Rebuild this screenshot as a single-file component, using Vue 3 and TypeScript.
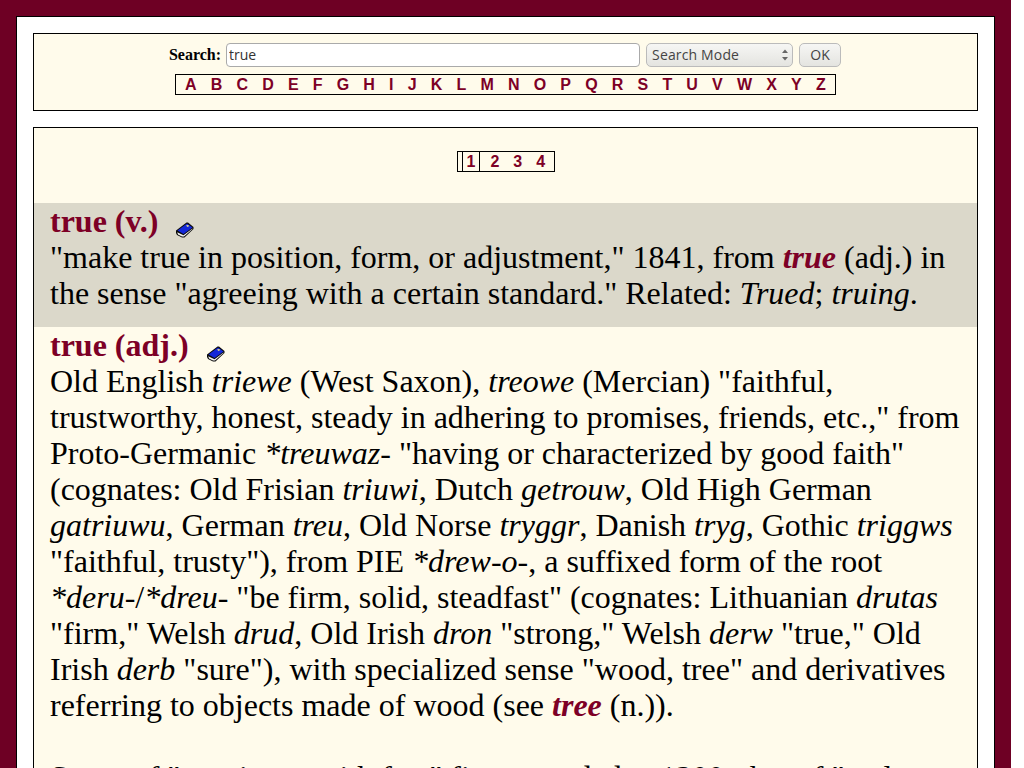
<script setup lang="ts">
const letters: string[] = 'ABCDEFGHIJKLMNOPQRSTUVWXYZ'.split('')
const pages: string[] = ['2', '3', '4']
</script>

<template>
  <div class="page">
    <div class="sheet">
      <section class="box search">
        <form class="search-row" @submit.prevent>
          <label class="search-label" for="q">Search:</label>
          <input id="q" class="search-input" type="text" value="true" />
          <div class="mode">
            <span>Search Mode</span>
            <svg class="updown" width="8" height="14" viewBox="0 0 8 14">
              <path d="M4 1.5 L7 5 L1 5 Z" fill="#666" />
              <path d="M4 12.5 L7 9 L1 9 Z" fill="#666" />
            </svg>
          </div>
          <button class="ok" type="button">OK</button>
        </form>
        <div class="letters">
          <a v-for="l in letters" :key="l" class="letter">{{ l }}</a>
        </div>
      </section>

      <section class="box results">
        <div class="pager-wrap">
          <div class="pager">
            <span class="pager-stub"></span>
            <a class="pg current">1</a>
            <a v-for="p in pages" :key="p" class="pg">{{ p }}</a>
          </div>
        </div>

        <article class="entry shaded">
          <div class="term">
            <a class="term-link">true (v.)</a>
            <svg class="book" width="19" height="16" viewBox="0 0 19 16">
              <path d="M1 8.5 L11.5 0.5 L13 0.5 L18.5 5 L18.5 7 L9.5 15.5 L7 15.5 L2 13 L1 11 Z" fill="#0a0a0a" />
              <path d="M2.5 8.5 L12 1.5 L17.5 5.5 L8.5 12 Z" fill="#1428d8" />
              <path d="M11 3.5 L13 3 L14.3 4 L12.5 5 Z" fill="#e6df8c" />
              <path d="M2.2 10.2 L8.5 13.2 L17.5 6.5 L17.5 7 L9 14.5 L7 14.5 L3 12.5 Z" fill="#f2f2f2" />
            </svg>
          </div>
          <p>"make true in position, form, or adjustment," 1841, from <a class="xref">true</a> (adj.) in the sense "agreeing with a certain standard." Related: <i>Trued</i>; <i>truing</i>.</p>
        </article>

        <article class="entry">
          <div class="term">
            <a class="term-link">true (adj.)</a>
            <svg class="book" width="19" height="16" viewBox="0 0 19 16">
              <path d="M1 8.5 L11.5 0.5 L13 0.5 L18.5 5 L18.5 7 L9.5 15.5 L7 15.5 L2 13 L1 11 Z" fill="#0a0a0a" />
              <path d="M2.5 8.5 L12 1.5 L17.5 5.5 L8.5 12 Z" fill="#1428d8" />
              <path d="M11 3.5 L13 3 L14.3 4 L12.5 5 Z" fill="#e6df8c" />
              <path d="M2.2 10.2 L8.5 13.2 L17.5 6.5 L17.5 7 L9 14.5 L7 14.5 L3 12.5 Z" fill="#f2f2f2" />
            </svg>
          </div>
          <p>Old English <i>triewe</i> (West Saxon), <i>treowe</i> (Mercian) "faithful, trustworthy, honest, steady in adhering to promises, friends, etc.," from Proto-Germanic <i>*treuwaz-</i> "having or characterized by good faith" (cognates: Old Frisian <i>triuwi</i>, Dutch <i>getrouw</i>, Old High German <i>gatriuwu</i>, German <i>treu</i>, Old Norse <i>tryggr</i>, Danish <i>tryg</i>, Gothic <i>triggws</i> "faithful, trusty"), from PIE <i>*drew-o-</i>, a suffixed form of the root <i>*deru-</i>/<i>*dreu-</i> "be firm, solid, steadfast" (cognates: Lithuanian <i>drutas</i> "firm," Welsh <i>drud</i>, Old Irish <i>dron</i> "strong," Welsh <i>derw</i> "true," Old Irish <i>derb</i> "sure"), with specialized sense "wood, tree" and derivatives referring to objects made of wood (see <a class="xref">tree</a> (n.)).</p>
          <p class="next">Sense of "consistent with fact" first recorded c. 1200; that of "real</p>
        </article>
      </section>
    </div>
  </div>
</template>

<style scoped>
.page {
  width: 1011px;
  height: 768px;
  box-sizing: border-box;
  background: #6e0024;
  padding: 16px 16px 0;
  overflow: hidden;
}
.sheet {
  background: #fff;
  border: 1px solid #000;
  border-bottom: 0;
  height: 900px;
  padding: 16px 16px 0;
  box-sizing: border-box;
}
.box {
  background: #fffbeb;
  border: 1px solid #000;
}
.search {
  height: 78px;
  box-sizing: border-box;
  padding-top: 9px;
  display: flex;
  flex-direction: column;
  align-items: center;
}
.search-row {
  display: flex;
  align-items: center;
  height: 24px;
  margin: 0;
  font-family: "Liberation Serif", serif;
}
.search-label {
  font-size: 16px;
  font-weight: bold;
  color: #000;
  margin-right: 5px;
  margin-left: -1px;
}
.search-input {
  width: 414px;
  height: 24px;
  box-sizing: border-box;
  border: 1px solid #aaa;
  border-radius: 4px;
  background: #fff;
  padding: 0 2px 2px;
  margin: 0 6px 0 0;
  font-family: "Open Sans", "DejaVu Sans", sans-serif;
  font-size: 14px;
  color: #333;
  outline: none;
}
.mode {
  width: 147px;
  height: 24px;
  box-sizing: border-box;
  border: 1px solid #bbb;
  border-radius: 5px;
  background: linear-gradient(#f6f6f4, #e4e4e0);
  display: flex;
  align-items: center;
  justify-content: space-between;
  padding: 0 3px 2px 5px;
  margin-right: 6px;
  font-family: "Open Sans", "DejaVu Sans", sans-serif;
  font-size: 14px;
  letter-spacing: 0.15px;
  color: #444;
}
.updown {
  margin-top: 2px;
}
.ok {
  width: 42px;
  height: 24px;
  box-sizing: border-box;
  border: 1px solid #bbb;
  border-radius: 5px;
  background: linear-gradient(#f6f6f4, #e4e4e0);
  padding: 0 0 2px;
  font-family: "Open Sans", "DejaVu Sans", sans-serif;
  font-size: 14px;
  color: #444;
}
.letters {
  margin-top: 7px;
  height: 21px;
  box-sizing: border-box;
  width: 661px;
  border: 1px solid #000;
  display: flex;
  justify-content: space-between;
  align-items: center;
  padding: 0 9px;
  font-family: "Liberation Sans", Arial, sans-serif;
  font-size: 16px;
  font-weight: bold;
}
.letter {
  color: #7d0026;
}
.results {
  margin-top: 16px;
  padding-top: 23px;
}
.pager-wrap {
  display: flex;
  justify-content: center;
  height: 52px;
}
.pager {
  width: 98px;
  height: 21px;
  box-sizing: border-box;
  border: 1px solid #000;
  display: flex;
  align-items: center;
  font-family: "Liberation Sans", Arial, sans-serif;
  font-size: 16px;
  font-weight: bold;
}
.pager-stub {
  width: 4px;
  height: 100%;
  border-right: 1px solid #000;
}
.pg {
  color: #7d0026;
  margin-left: 14px;
  line-height: 19px;
}
.pg.current {
  margin-left: 0;
  padding: 0 4px;
  border-right: 1px solid #000;
}
.pg.current + .pg {
  margin-left: 10px;
}
.entry {
  padding: 0 16px;
  font-family: "Liberation Serif", serif;
  font-size: 32px;
  line-height: 36px;
  color: #000;
}
.entry.shaded {
  background: #dbd8ca;
  padding-bottom: 16px;
}
.term {
  font-size: 32px;
  line-height: 36px;
  font-weight: bold;
  white-space: nowrap;
}
.term-link {
  color: #7d0026;
}
.book {
  margin-left: 17px;
  vertical-align: -6px;
}
p {
  margin: 0;
}
.next {
  margin-top: 36px;
}
.xref {
  color: #7d0026;
  font-weight: bold;
  font-style: italic;
}
i {
  font-style: italic;
}
</style>

<style>
html, body {
  margin: 0;
  background: #fff;
  overflow: hidden;
}
</style>
